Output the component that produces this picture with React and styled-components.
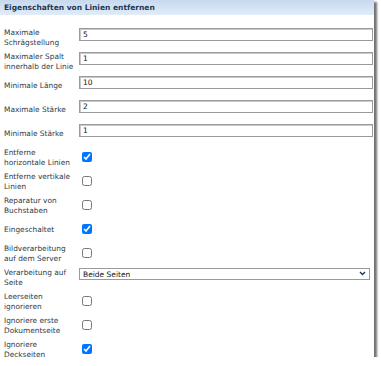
import styled, { createGlobalStyle } from "styled-components";

const fields = [
  { label: ["Maximale", "Schrägstellung"], type: "text", value: "5" },
  { label: ["Maximaler Spalt", "innerhalb der Linie"], type: "text", value: "1" },
  { label: ["Minimale Länge"], type: "text", value: "10" },
  { label: ["Maximale Stärke"], type: "text", value: "2" },
  { label: ["Minimale Stärke"], type: "text", value: "1" },
  { label: ["Entferne", "horizontale Linien"], type: "check", value: true },
  { label: ["Entferne vertikale", "Linien"], type: "check", value: false },
  { label: ["Reparatur von", "Buchstaben"], type: "check", value: false },
  { label: ["Eingeschaltet"], type: "check", value: true },
  { label: ["Bildverarbeitung", "auf dem Server"], type: "check", value: false },
  { label: ["Verarbeitung auf", "Seite"], type: "select", value: "Beide Seiten" },
  { label: ["Leerseiten", "ignorieren"], type: "check", value: false },
  { label: ["Ignoriere erste", "Dokumentseite"], type: "check", value: false },
  { label: ["Ignoriere", "Deckseiten"], type: "check", value: true },
];

export default function App() {
  return (
    <>
      <GlobalStyle />
      <Panel>
        <Header>Eigenschaften von Linien entfernen</Header>
        <Form>
          {fields.map((f, i) => (
            <Row key={i}>
              <Label>
                {f.label.map((line, j) => (
                  <span key={j}>{line}</span>
                ))}
              </Label>
              <Control>
                {f.type === "text" && <TextInput defaultValue={f.value} />}
                {f.type === "check" && <Check type="checkbox" defaultChecked={f.value} />}
                {f.type === "select" && (
                  <SelectWrap>
                    <Select defaultValue={f.value}>
                      <option>Beide Seiten</option>
                      <option>Vorderseite</option>
                      <option>Rückseite</option>
                    </Select>
                    <Chevron viewBox="0 0 8 6">
                      <path d="M1 1.2 L4 4.2 L7 1.2" fill="none" stroke="#1c3553" strokeWidth="1.6" />
                    </Chevron>
                  </SelectWrap>
                )}
              </Control>
            </Row>
          ))}
        </Form>
      </Panel>
    </>
  );
}

const GlobalStyle = createGlobalStyle`
  body {
    margin: 0;
    background: #fff;
    font-family: "DejaVu Sans", Verdana, sans-serif;
  }
`;
const Panel = styled.div`
  width: 374px;
  height: 357px;
  background: #fff;
  box-shadow: 3px 2px 2px rgba(0, 0, 0, 0.55);
`;
const Header = styled.div`
  height: 15px;
  line-height: 15px;
  padding-left: 4px;
  background: linear-gradient(#c7d9ee, #e1ecf8);
  color: #1c3553;
  font-size: 7.5px;
  font-weight: bold;
`;
const Form = styled.div`
  display: flex;
  flex-direction: column;
  gap: 4px;
  padding: 13px 1px 0 4px;
`;
const Row = styled.div`
  display: grid;
  grid-template-columns: 75px 1fr;
  height: 20px;
`;
const Label = styled.div`
  display: flex;
  flex-direction: column;
  justify-content: center;
  font-size: 7.4px;
  line-height: 10px;
  color: #2e3a46;
  span {
    white-space: nowrap;
  }
`;
const Control = styled.div`
  display: flex;
  align-items: flex-start;
`;
const TextInput = styled.input`
  box-sizing: border-box;
  width: 100%;
  height: 13px;
  margin: 0;
  padding: 0 0 0 3px;
  border: 1px solid #9a9a9a;
  box-shadow: inset 1px 1px 0 #c9c9c9;
  font-family: "DejaVu Sans", Verdana, sans-serif;
  font-size: 7.5px;
  color: #111;
  outline: none;
`;
const Check = styled.input`
  width: 10px;
  height: 10px;
  margin: 4px 0 0 3px;
  accent-color: #0075ff;
`;
const SelectWrap = styled.div`
  position: relative;
  width: 291px;
`;
const Select = styled.select`
  box-sizing: border-box;
  display: block;
  width: 100%;
  height: 12px;
  margin: 0;
  padding: 0 0 0 3px;
  border: 1px solid #9a9a9a;
  border-radius: 0;
  background: #fff;
  font-family: "DejaVu Sans", Verdana, sans-serif;
  font-size: 7.5px;
  color: #111;
  appearance: none;
  outline: none;
`;
const Chevron = styled.svg`
  position: absolute;
  right: 4px;
  top: 3px;
  width: 7px;
  height: 5px;
  pointer-events: none;
`;
